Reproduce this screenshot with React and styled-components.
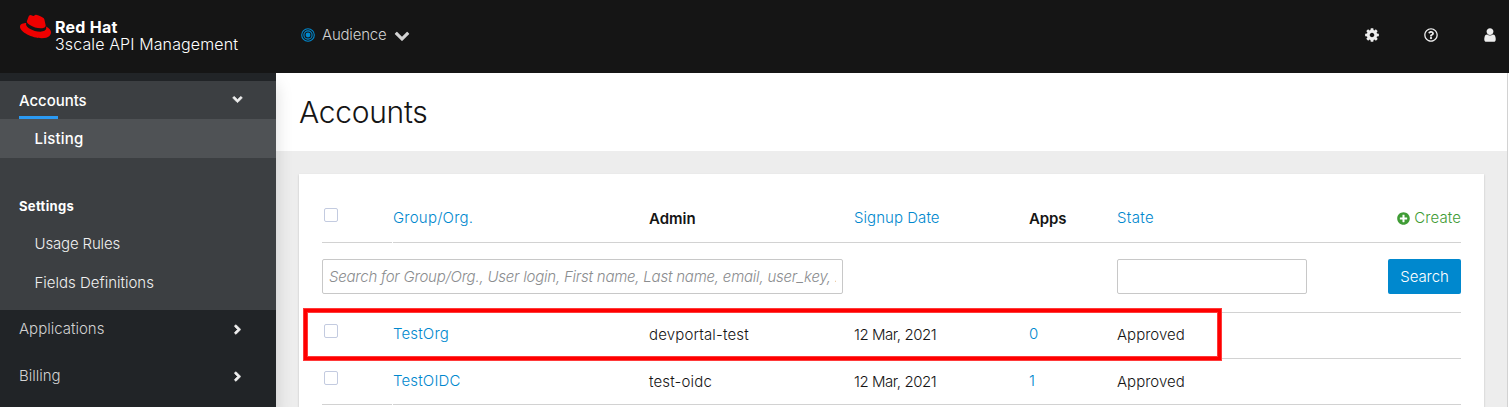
import React from 'react';
import styled, { createGlobalStyle, css } from 'styled-components';
import { FaAngleDown, FaAngleRight, FaPlusCircle, FaRegQuestionCircle } from 'react-icons/fa';
import { SiRedhat } from 'react-icons/si';

const GlobalStyle = createGlobalStyle`
  *, *::before, *::after { box-sizing: border-box; }
  body {
    margin: 0;
    background: #fff;
    color: #151515;
    font: 350 15px/20px Inter, "Liberation Sans", sans-serif;
    overflow: hidden;
  }
  a { color: inherit; text-decoration: none; }
`;

const Page = styled.div`
  display: flex;
  flex-direction: column;
  height: 407px;
  overflow: hidden;
`;

const Header = styled.header`
  display: flex;
  flex: none;
  height: 73px;
  background: #151515;
  color: #ededed;
`;

const Brand = styled.a`
  display: flex;
  width: 276px;
  padding: 11px 0 0 20px;
  color: #fff;
`;

const Hat = styled(SiRedhat)`
  flex: none;
  width: 31px;
  height: 31px;
  margin-right: 4px;
  color: #e00;
`;

const BrandText = styled.div`
  padding-top: 8px;
  font-size: 16px;
  letter-spacing: 0.12px;
  line-height: 17px;
  white-space: nowrap;
`;

const BrandName = styled.div`
  font-weight: 700;
  letter-spacing: 0.25px;
`;

const ContextMenu = styled.button`
  display: flex;
  align-items: center;
  height: 70px;
  padding: 0;
  margin-left: 25px;
  border: 0;
  background: none;
  color: #d2d2d2;
  font: inherit;
  letter-spacing: -0.2px;
`;

const ContextLabel = styled.span`
  margin: 0 8px 0 7px;
`;

const Tools = styled.div`
  display: flex;
  align-items: center;
  height: 70px;
  margin-left: auto;
  padding-right: 11px;
  gap: 44px;
  color: #ededed;
`;

const HelpIcon = styled(FaRegQuestionCircle)`
  width: 14px;
  height: 14px;
  margin-bottom: 1px;
`;

const Glyph = styled.svg`
  display: block;
  width: ${(p) => p.$size}px;
  height: ${(p) => p.$size}px;
  fill: currentColor;
`;

const Body = styled.div`
  display: flex;
  flex: 1;
  min-height: 0;
`;

const Sidebar = styled.nav`
  position: relative;
  z-index: 1;
  flex: none;
  width: 276px;
  padding-top: 8px;
  background: #212427;
  box-shadow: 0 12px 16px rgba(3, 3, 3, 0.15);
  clip-path: inset(0 -20px 0 0);
`;

const OpenGroup = styled.div`
  height: 229px;
  background: #3c3f42;
`;

const SectionLink = styled.a`
  display: flex;
  align-items: center;
  justify-content: space-between;
  height: 38px;
  margin-bottom: 9px;
  padding: 0 31px 0 19px;
  color: #d2d2d2;
  letter-spacing: 0;

  svg { width: 15px; height: 15px; color: #ededed; stroke: currentColor; stroke-width: 20px; }

  ${(p) => p.$open && css`
    position: relative;
    margin-bottom: 0;
    padding-top: 1px;
    color: #fff;
    font-weight: 500;
    letter-spacing: -0.05px;

    svg { margin-bottom: 2px; }

    &::after {
      content: "";
      position: absolute;
      left: 19px;
      bottom: 0;
      width: 39px;
      height: 3px;
      background: #2b9af3;
    }
  `}
`;

const SubLink = styled.a`
  display: flex;
  align-items: center;
  height: 39px;
  padding-left: 34.5px;
  color: #f0f0f0;
  letter-spacing: ${(p) => p.$tracking || 0}px;

  ${(p) => p.$current && css`
    background: #4f5255;
    color: #fff;
    font-weight: 500;
  `}
`;

const GroupTitle = styled.h2`
  margin: 38px 0 8px 19px;
  color: #fff;
  font-size: 13px;
  font-weight: 700;
  letter-spacing: 0.35px;
  line-height: 20px;
`;

const Main = styled.main`
  display: flex;
  flex: 1;
  flex-direction: column;
  margin-right: 1px;
  border-right: 1px solid #d2d2d2;
  background: #ededed;
`;

const TitleBar = styled.div`
  display: flex;
  align-items: center;
  flex: none;
  height: 78px;
  padding: 0 0 1px 23px;
  background: #fff;
`;

const Title = styled.h1`
  margin: 0;
  font-size: 30px;
  font-weight: 300;
  letter-spacing: -0.3px;
  line-height: 40px;
`;

const Card = styled.section`
  position: relative;
  flex: 1;
  margin: 23px 23px 0;
  padding: 21px 23px 0;
  background: #fff;
  box-shadow: 0 1px 2px rgba(3, 3, 3, 0.2);
`;

const TableRow = styled.div`
  display: grid;
  grid-template-columns: 71px 256px 205px 175px 88px 1fr auto;
  height: ${(p) => p.$height}px;
`;

const Cell = styled.div`
  padding-top: ${(p) => p.$top}px;
  border-bottom: 1px solid #d2d2d2;
  color: ${(p) => (p.$link ? '#0088ce' : 'inherit')};
  font-weight: ${(p) => (p.$heading ? 600 : 'inherit')};
  letter-spacing: ${(p) => p.$tracking || 0}px;
  white-space: nowrap;
`;

const CheckCell = styled(Cell)`
  margin-right: 1px;
  padding-left: 2px;
`;

const Checkbox = styled.input.attrs({ type: 'checkbox' })`
  display: block;
  appearance: none;
  width: 14px;
  height: 14px;
  margin: 0;
  border: 1px solid #c3cbe0;
  border-radius: 2px;
  background: #fff;
`;

const CreateLink = styled.a`
  display: flex;
  align-items: center;
  gap: 4px;
  color: #3f9c35;
  letter-spacing: 0.1px;
  svg { width: 13px; height: 13px; }
`;

const FilterRow = styled.form`
  display: flex;
  height: 70px;
  padding-top: 16px;
  border-bottom: 1px solid #d2d2d2;
`;

const Field = styled.input`
  width: ${(p) => p.$width}px;
  height: 35px;
  padding: 0 6px;
  border: 1px solid #c8c8c8;
  border-radius: 2px;
  background: #fff;
  font: inherit;
  letter-spacing: -0.22px;

  &::placeholder { color: #8b8d8f; font-style: italic; opacity: 1; }
  & + & { margin-left: 274px; }
`;

const SearchButton = styled.button`
  width: 73px;
  height: 35px;
  margin-left: auto;
  padding: 0;
  border: 0;
  border-radius: 2px;
  background: #0088ce;
  color: #fff;
  font: inherit;
  letter-spacing: -0.1px;
`;

const Highlight = styled.div`
  position: absolute;
  top: 135px;
  left: 5px;
  width: 917px;
  height: 51px;
  border: 3px solid #f00;
  box-shadow: 0 0 0 1px #ff3a3a, inset 0 0 0 1px #ff3a3a;
  pointer-events: none;
`;

const CogIcon = () => (
  <Glyph $size={16} viewBox="0 0 1792 1792">
    <path d="M1152 896q0-106-75-181t-181-75-181 75-75 181 75 181 181 75 181-75 75-181zm512-109v222q0 12-8 23t-20 13l-185 28q-19 54-39 91 35 50 107 138 10 12 10 25t-9 23q-27 37-99 108t-94 71q-12 0-26-9l-138-108q-44 23-91 38-16 136-29 186-7 28-36 28h-222q-14 0-24.500-8.500t-11.500-21.500l-28-184q-49-16-90-37l-141 107q-10 9-25 9-14 0-25-11-126-114-165-168-7-10-7-23 0-12 8-23 15-21 51-66.500t54-70.500q-27-50-41-99l-183-27q-13-2-21-12.500t-8-23.500v-222q0-12 8-23t19-13l186-28q14-46 39-92-40-57-107-138-10-12-10-24 0-10 9-23 26-36 98.500-107.500t94.500-71.500q13 0 26 10l138 107q44-23 91-38 16-136 29-186 7-28 36-28h222q14 0 24.500 8.500t11.500 21.500l28 184q49 16 90 37l142-107q9-9 24-9 13 0 25 10 129 119 165 170 7 8 7 22 0 12-8 23-15 21-51 66.500t-54 70.500q26 50 41 98l183 28q13 2 21 12.500t8 23.500z" />
  </Glyph>
);

const UserIcon = () => (
  <Glyph $size={16} viewBox="0 0 1792 1792">
    <path d="M1536 1399q0 109-62.500 187t-150.500 78h-854q-88 0-150.500-78t-62.500-187q0-85 8.500-160.500t31.500-152 58.500-131 94-89 134.500-34.500q131 128 313 128t313-128q76 0 134.500 34.500t94 89 58.500 131 31.500 152 8.500 160.500zm-256-887q0 159-112.500 271.500t-271.500 112.500-271.500-112.500-112.500-271.500 112.500-271.500 271.500-112.500 271.500 112.500 112.500 271.500z" />
  </Glyph>
);

const ChevronIcon = () => (
  <Glyph $size={16} viewBox="0 0 1792 1792">
    <path d="M1683 808l-742 741q-19 19-45 19t-45-19l-742-741q-19-19-19-45.500t19-45.500l166-165q19-19 45-19t45 19l531 531 531-531q19-19 45-19t45 19l166 165q19 19 19 45.500t-19 45.500z" />
  </Glyph>
);

const TargetIcon = () => (
  <Glyph $size={14} viewBox="0 0 14 14">
    <g fill="none" stroke="#0088ce">
      <circle cx="7" cy="7" r="6.3" strokeWidth="1.1" />
      <circle cx="7" cy="7" r="4.1" strokeWidth="1.1" />
    </g>
    <circle cx="7" cy="7" r="2.4" fill="#0088ce" />
  </Glyph>
);

const accounts = [
  { org: 'TestOrg', admin: 'devportal-test', date: '12 Mar, 2021', apps: 0, state: 'Approved' },
  { org: 'TestOIDC', admin: 'test-oidc', date: '12 Mar, 2021', apps: 1, state: 'Approved' },
];

export default function App() {
  return (
    <Page>
      <GlobalStyle />
      <Header>
        <Brand href="#">
          <Hat />
          <BrandText>
            <BrandName>Red Hat</BrandName>
            <div>3scale API Management</div>
          </BrandText>
        </Brand>
        <ContextMenu>
          <TargetIcon />
          <ContextLabel>Audience</ContextLabel>
          <ChevronIcon />
        </ContextMenu>
        <Tools>
          <CogIcon />
          <HelpIcon />
          <UserIcon />
        </Tools>
      </Header>
      <Body>
        <Sidebar>
          <OpenGroup>
            <SectionLink href="#" $open>Accounts<FaAngleDown /></SectionLink>
            <SubLink href="#" $current $tracking={0.2}>Listing</SubLink>
            <GroupTitle>Settings</GroupTitle>
            <SubLink href="#" $tracking={-0.15}>Usage Rules</SubLink>
            <SubLink href="#">Fields Definitions</SubLink>
          </OpenGroup>
          <SectionLink href="#">Applications<FaAngleRight /></SectionLink>
          <SectionLink href="#">Billing<FaAngleRight /></SectionLink>
        </Sidebar>
        <Main>
          <TitleBar><Title>Accounts</Title></TitleBar>
          <Card>
            <TableRow $height={48}>
              <CheckCell $top={13}><Checkbox /></CheckCell>
              <Cell $top={13} $link $tracking={0.22}>Group/Org.</Cell>
              <Cell $top={14} $heading>Admin</Cell>
              <Cell $top={13} $link $tracking={0.05}>Signup Date</Cell>
              <Cell $top={14} $heading $tracking={-0.1}>Apps</Cell>
              <Cell $top={13} $link $tracking={0.35}>State</Cell>
              <Cell $top={13}><CreateLink href="#"><FaPlusCircle />Create</CreateLink></Cell>
            </TableRow>
            <FilterRow>
              <Field $width={521} placeholder="Search for Group/Org., User login, First name, Last name, email, user_key, ..." />
              <Field $width={190} />
              <SearchButton type="button">Search</SearchButton>
            </FilterRow>
            {accounts.map((a) => (
              <TableRow key={a.org} $height={46.15}>
                <CheckCell $top={11.4}><Checkbox /></CheckCell>
                <Cell $top={11.4} $link $tracking={0.15}>{a.org}</Cell>
                <Cell $top={12.4} $tracking={0.15}>{a.admin}</Cell>
                <Cell $top={12.4} $tracking={-0.45}>{a.date}</Cell>
                <Cell $top={11.4} $link>{a.apps}</Cell>
                <Cell $top={12.4}>{a.state}</Cell>
                <Cell />
              </TableRow>
            ))}
            <Highlight />
          </Card>
        </Main>
      </Body>
    </Page>
  );
}
